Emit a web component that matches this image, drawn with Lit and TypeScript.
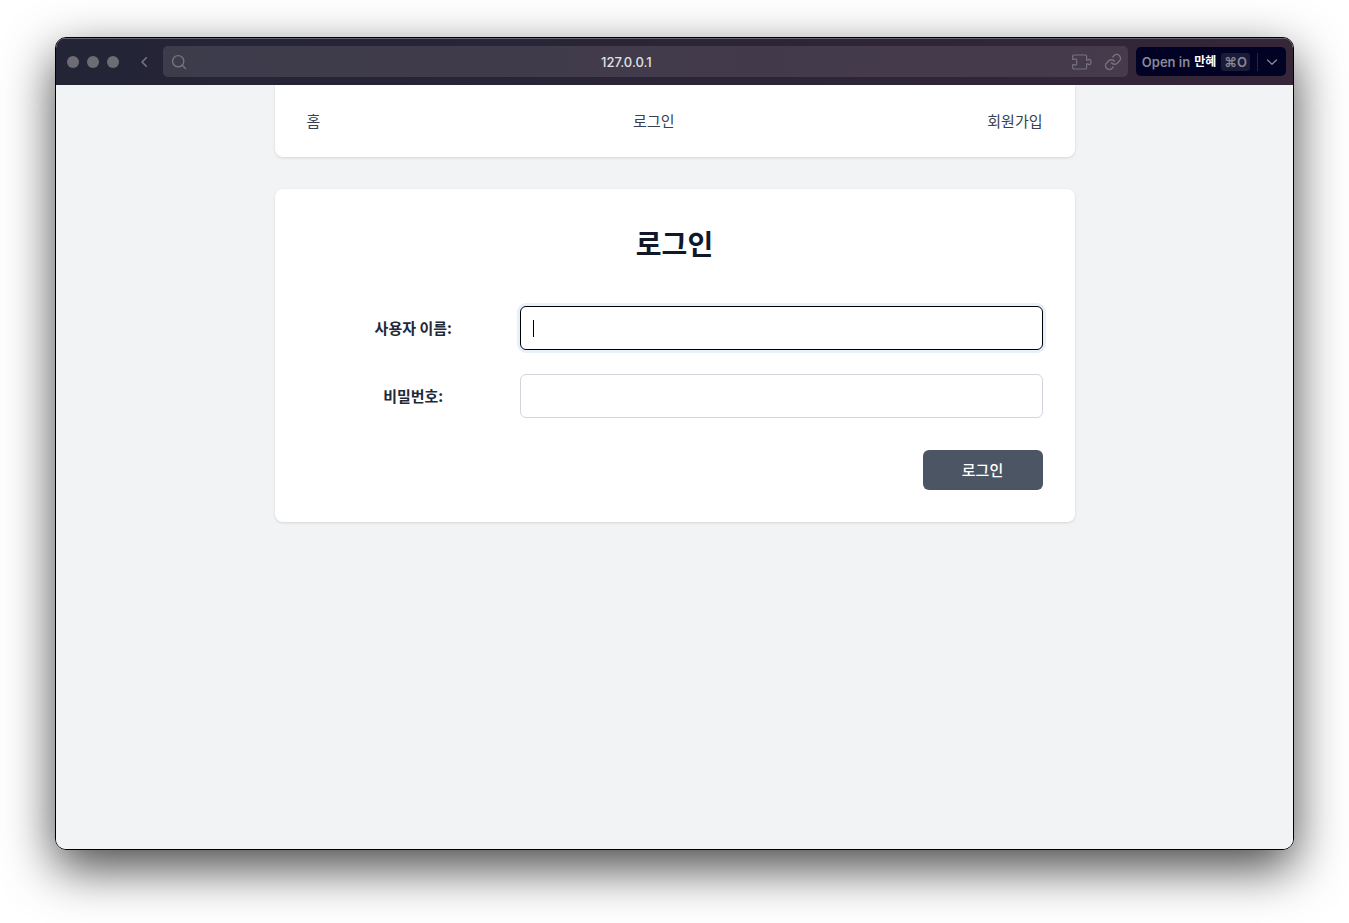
import { LitElement, html, css } from "lit";
import { customElement, query } from "lit/decorators.js";

@customElement("browser-toolbar")
class BrowserToolbar extends LitElement {
  static styles = css`
    :host {
      display: flex;
      align-items: center;
      height: 47px;
      box-sizing: border-box;
      padding: 0 7px 0 11px;
      background: linear-gradient(90deg, #242437 0%, #292437 35%, #302538 70%, #352638 100%);
      box-shadow: inset 0 1px 0 #64646e;
      font-family: Inter, "Noto Sans CJK KR", sans-serif;
      font-size: 13px;
      line-height: 18px;
      font-weight: 500;
    }
    svg {
      display: block;
      fill: none;
      stroke: currentColor;
      stroke-linecap: round;
      stroke-linejoin: round;
    }
    button {
      margin: 0;
      padding: 0;
      border: 0;
      background: none;
      color: inherit;
      font: inherit;
    }
    .lights {
      display: flex;
      gap: 8px;
    }
    .light {
      width: 12px;
      height: 12px;
      border-radius: 50%;
      background: #6d6b74;
    }
    .back {
      margin: 0 11px 0 17px;
      color: #797785;
    }
    .address {
      flex: 1;
      display: flex;
      align-items: center;
      height: 31px;
      padding: 0 6px 0 8px;
      border-radius: 5px;
      background: linear-gradient(90deg, #3d3c4b, #463a4b);
      color: #77727f;
    }
    .url {
      flex: 1;
      padding-right: 6px;
      text-align: center;
      color: #e2e0e4;
    }
    .tools {
      display: flex;
      align-items: center;
      gap: 12px;
    }
    .open {
      display: flex;
      align-items: center;
      height: 29px;
      margin-left: 8px;
      padding: 0 6px;
      box-sizing: border-box;
      border-radius: 5px;
      background: #020224;
      color: #898996;
      font-weight: 600;
    }
    .main {
      display: flex;
      align-items: center;
    }
    .space {
      margin-left: 4px;
      font-size: 12px;
      font-weight: 700;
      color: #fff;
    }
    .keys {
      margin-left: 5px;
      padding: 0 3px;
      border-radius: 3px;
      background: #1b1b38;
    }
    .rule {
      width: 1px;
      height: 18px;
      margin: 0 6px 0 7px;
      background: #26263e;
    }
  `;

  render() {
    return html`
      <div class="lights">
        <span class="light"></span><span class="light"></span><span class="light"></span>
      </div>
      <button class="back" aria-label="Back">
        <svg width="16" height="16" viewBox="0 0 16 16" stroke-width="1.5"><path d="M10.300 3.800 6 8l4.300 4.200" /></svg>
      </button>
      <div class="address">
        <svg width="16" height="16" viewBox="0 0 16 16" stroke-width="1.400">
          <circle cx="7.200" cy="7.200" r="5.600" /><path d="m11.300 11.300 3.200 3.200" />
        </svg>
        <span class="url">127.0.0.1</span>
        <div class="tools">
          <button aria-label="Extensions">
            <svg width="20" height="16" viewBox="0 0 20 16" stroke-width="1.200">
              <path d="M.7 5.500V2.200A1.200 1.200 0 0 1 1.900 1H13.400a1.200 1.200 0 0 1 1.200 1.200V6.200h1.400q.3-.9 1.300-.9a1.600 1.600 0 0 1 1.600 1.600v2.200a1.600 1.600 0 0 1-1.600 1.600q-1 0-1.300-.9h-1.400v4a1.200 1.200 0 0 1-1.200 1.200H1.900A1.200 1.200 0 0 1 .7 13.800V10.500h1.300q.3.700 1.200.7a1.500 1.500 0 0 0 1.500-1.500V6.300a1.500 1.500 0 0 0-1.500-1.500q-.9 0-1.200.7z" />
            </svg>
          </button>
          <button aria-label="Copy link">
            <svg width="18" height="18" viewBox="0 0 24 24" stroke-width="1.900">
              <path d="M10 13a5 5 0 0 0 7.540.54l3-3a5 5 0 0 0-7.070-7.070l-1.720 1.710" />
              <path d="M14 11a5 5 0 0 0-7.540-.54l-3 3a5 5 0 0 0 7.070 7.070l1.710-1.710" />
            </svg>
          </button>
        </div>
      </div>
      <div class="open">
        <button class="main">
          <span>Open in</span><span class="space">만혜</span><span class="keys">⌘O</span>
        </button>
        <span class="rule"></span>
        <button aria-label="More spaces">
          <svg width="16" height="16" viewBox="0 0 16 16" stroke-width="1.300"><path d="m3.500 6 4.500 4.300L12.500 6" /></svg>
        </button>
      </div>
    `;
  }
}

@customElement("login-page")
class LoginPage extends LitElement {
  static styles = css`
    :host {
      display: block;
      background: #f2f3f5;
      font-family: "Noto Sans CJK KR", sans-serif;
      font-size: 15px;
      line-height: 24px;
      color: #1f2937;
    }
    .card {
      max-width: 800px;
      box-sizing: border-box;
      margin: 0 auto 32px;
      padding: 32px;
      border-radius: 8px;
      background: #fff;
      box-shadow: 0 1px 3px rgba(0, 0, 0, 0.12);
    }
    .nav {
      display: flex;
      justify-content: space-between;
      padding-top: 24px;
      padding-bottom: 24px;
      border-radius: 0 0 8px 8px;
    }
    .nav a {
      color: #374151;
      text-decoration: none;
    }
    h1 {
      margin: 0 0 41px;
      font-size: 28px;
      line-height: 44px;
      font-weight: 700;
      text-align: center;
      color: #111827;
    }
    .row {
      display: grid;
      grid-template-columns: 29fr 71fr;
      align-items: center;
      margin-bottom: 24px;
    }
    label {
      font-weight: 700;
      text-align: center;
    }
    .field {
      position: relative;
      display: flex;
    }
    input {
      width: 100%;
      height: 44px;
      box-sizing: border-box;
      padding: 0 12px;
      border: 1px solid #d1d5db;
      border-radius: 6px;
      background: #fff;
      font: inherit;
      outline: none;
      caret-color: transparent;
    }
    input:focus {
      border-color: #000;
      box-shadow: 0 0 0 3px #e8effd;
    }
    input:focus + .caret {
      position: absolute;
      left: 13px;
      top: 14px;
      width: 1px;
      height: 17px;
      background: #000;
    }
    .actions {
      display: flex;
      justify-content: flex-end;
      padding-top: 8px;
    }
    .submit {
      width: 120px;
      height: 40px;
      padding: 0;
      border: 0;
      border-radius: 6px;
      background: #4b5563;
      color: #fff;
      font: inherit;
      font-weight: 500;
    }
  `;

  @query("#username") username!: HTMLInputElement;

  firstUpdated() {
    this.username.focus();
  }

  render() {
    return html`
      <nav class="card nav">
        <a href="#home">홈</a><a href="#login">로그인</a><a href="#signup">회원가입</a>
      </nav>
      <main class="card">
        <h1>로그인</h1>
        <form @submit=${(e: Event) => e.preventDefault()}>
          <div class="row">
            <label for="username">사용자 이름:</label>
            <div class="field"><input id="username" type="text" /><span class="caret"></span></div>
          </div>
          <div class="row">
            <label for="password">비밀번호:</label>
            <div class="field"><input id="password" type="password" /><span class="caret"></span></div>
          </div>
          <div class="actions"><button class="submit" type="submit">로그인</button></div>
        </form>
      </main>
    `;
  }
}

@customElement("app-root")
class AppRoot extends LitElement {
  static styles = css`
    :host {
      display: flex;
      min-height: 100vh;
      box-sizing: border-box;
      padding: 37px 55px 73px;
      background: #fff;
      overflow: hidden;
    }
    .window {
      flex: 1;
      display: flex;
      flex-direction: column;
      border: 1px solid #000;
      border-radius: 11px;
      overflow: hidden;
      box-shadow: 0 18px 50px rgba(0, 0, 0, 0.72);
    }
    .page {
      flex: 1;
    }
  `;

  render() {
    return html`
      <div class="window">
        <browser-toolbar></browser-toolbar>
        <login-page class="page"></login-page>
      </div>
    `;
  }
}
